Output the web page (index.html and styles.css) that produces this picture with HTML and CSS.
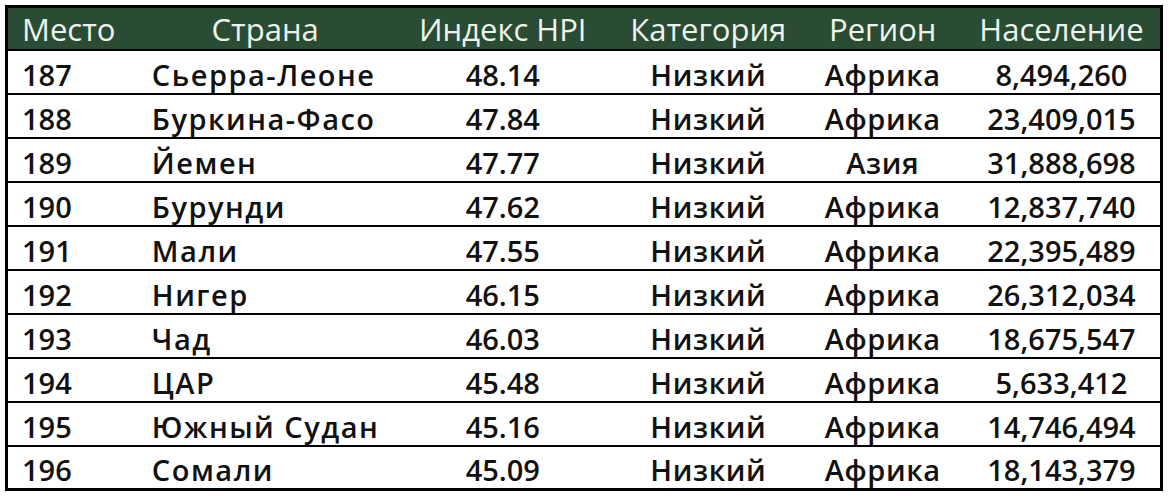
FILE: index.html
```html
<!DOCTYPE html>
<html lang="ru">
<head>
<meta charset="utf-8">
<link rel="stylesheet" href="styles.css">
</head>
<body>
<table class="hpi">
  <colgroup>
    <col class="c1"><col class="c2"><col class="c3"><col class="c4"><col class="c5"><col class="c6">
  </colgroup>
  <thead>
    <tr class="head">
      <th class="left">Место</th><th>Страна</th><th>Индекс HPI</th><th>Категория</th><th>Регион</th><th>Население</th>
    </tr>
  </thead>
  <tbody>
    <tr><td class="left">187</td><td class="left name">Сьерра-Леоне</td><td>48.14</td><td class="word">Низкий</td><td class="word">Африка</td><td>8,494,260</td></tr>
    <tr><td class="left">188</td><td class="left name">Буркина-Фасо</td><td>47.84</td><td class="word">Низкий</td><td class="word">Африка</td><td>23,409,015</td></tr>
    <tr><td class="left">189</td><td class="left name">Йемен</td><td>47.77</td><td class="word">Низкий</td><td class="word">Азия</td><td>31,888,698</td></tr>
    <tr><td class="left">190</td><td class="left name">Бурунди</td><td>47.62</td><td class="word">Низкий</td><td class="word">Африка</td><td>12,837,740</td></tr>
    <tr><td class="left">191</td><td class="left name">Мали</td><td>47.55</td><td class="word">Низкий</td><td class="word">Африка</td><td>22,395,489</td></tr>
    <tr><td class="left">192</td><td class="left name">Нигер</td><td>46.15</td><td class="word">Низкий</td><td class="word">Африка</td><td>26,312,034</td></tr>
    <tr><td class="left">193</td><td class="left name">Чад</td><td>46.03</td><td class="word">Низкий</td><td class="word">Африка</td><td>18,675,547</td></tr>
    <tr><td class="left">194</td><td class="left name">ЦАР</td><td>45.48</td><td class="word">Низкий</td><td class="word">Африка</td><td>5,633,412</td></tr>
    <tr><td class="left">195</td><td class="left name">Южный Судан</td><td>45.16</td><td class="word">Низкий</td><td class="word">Африка</td><td>14,746,494</td></tr>
    <tr><td class="left">196</td><td class="left name">Сомали</td><td>45.09</td><td class="word">Низкий</td><td class="word">Африка</td><td>18,143,379</td></tr>
  </tbody>
</table>
</body>
</html>
```
FILE: styles.css
```css
html, body {
  margin: 0;
  padding: 0;
  background: #ffffff;
}
body {
  padding: 5px 0 0 5px;
}
.hpi {
  border-collapse: collapse;
  table-layout: fixed;
  width: 1158px;
  border: 3px solid #000;
  font-family: "Open Sans", Roboto, sans-serif;
  font-weight: 600;
  font-size: 29px;
  color: #111;
}
.c1 { width: 132px; }
.c2 { width: 252px; }
.c3 { width: 222px; }
.c4 { width: 188px; }
.c5 { width: 160px; }
.c6 { width: 198px; }
.hpi th, .hpi td {
  padding: 0;
  text-align: center;
  white-space: nowrap;
  line-height: 1;
  box-sizing: border-box;
}
.head th {
  height: 43px;
  padding-top: 3px;
  background: #2a4c35;
  color: #eef4ec;
  font-weight: 500;
  font-size: 31px;
  border-bottom: 2px solid #000;
}
.hpi tbody tr {
  border-bottom: 2px solid #000;
}
.hpi td {
  height: 44px;
  padding-top: 5px;
}
.hpi .left {
  text-align: left;
  padding-left: 14px;
}
.hpi td.name {
  padding-left: 13px;
  letter-spacing: 1.5px;
}
.hpi td.word {
  letter-spacing: 0.6px;
}
```
